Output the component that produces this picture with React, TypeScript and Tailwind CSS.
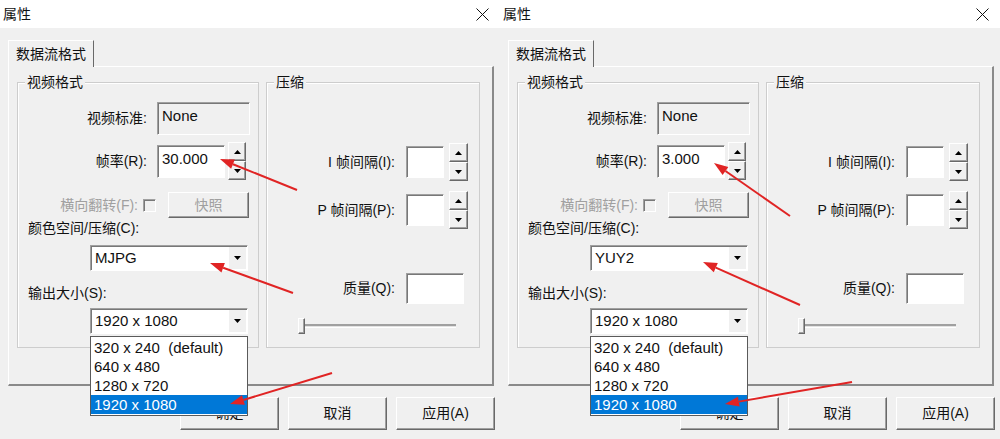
import React from 'react';

type Pt = [number, number];

// classic win32 3D edges
const raised = 'border border-t-white border-l-white border-r-[#696969] border-b-[#696969] shadow-[inset_-1px_-1px_0_#a0a0a0]';
const sunken = 'border border-t-[#a0a0a0] border-l-[#a0a0a0] border-r-white border-b-white shadow-[inset_1px_1px_0_#787878]';

function Tri({ down }: { down?: boolean }) {
  return (
    <svg width="7" height="4" viewBox="0 0 7 4">
      <path d={down ? 'M0 0h7L3.5 4z' : 'M0 4h7L3.5 0z'} fill="#000" />
    </svg>
  );
}

function Spinner({ className }: { className: string }) {
  return (
    <div className={`flex flex-col ${className}`}>
      <div className={`flex-1 flex items-center justify-center bg-[#f0f0f0] ${raised}`}>
        <Tri />
      </div>
      <div className={`flex-1 flex items-center justify-center bg-[#f0f0f0] ${raised}`}>
        <Tri down />
      </div>
    </div>
  );
}

function Combo({ value, children }: { value: string; children?: React.ReactNode }) {
  return (
    <div className={`relative flex w-[158px] h-[26px] bg-white ${sunken}`}>
      <span className="flex-1 flex items-center pl-[4px] text-[15px]">{value}</span>
      <div className="flex items-center justify-center w-[17px] my-[1px] mr-[1px] bg-[#f0f0f0]">
        <Tri down />
      </div>
      {children}
    </div>
  );
}

function GroupBox({ title, className, children }: { title: string; className: string; children: React.ReactNode }) {
  return (
    <div className={`relative border border-[#cdcdcd] shadow-[inset_1px_1px_0_#fff] ${className}`}>
      <span className="absolute -top-[9px] left-[7px] px-[2px] bg-[#f0f0f0] text-[14px] leading-[16px]">{title}</span>
      {children}
    </div>
  );
}

const sizes = ['320 x 240  (default)', '640 x 480', '1280 x 720', '1920 x 1080'];

function Dialog({ rate, codec }: { rate: string; codec: string }) {
  return (
    <div className="flex flex-col w-[500px] h-[439px]">
      <div className="flex items-center justify-between h-[28px] bg-white pl-[3px] pr-[11px]">
        <span className="text-[14px]">属性</span>
        <svg width="13" height="13" viewBox="0 0 13 13">
          <path d="M0.5 0.5l12 12M12.5 0.5l-12 12" stroke="#111" strokeWidth="1" />
        </svg>
      </div>

      <div className="pt-[12px] pl-[8px]">
        <div className="relative z-[1] -mb-px flex items-center justify-center w-[86px] h-[27px] bg-[#f0f0f0] border-t border-l border-white border-r border-r-[#696969] text-[14px]">
          数据流格式
        </div>
        <div className="flex gap-[7px] w-[486px] h-[320px] pl-[8px] pt-[15px] border-t border-l border-white border-r-2 border-b-2 border-r-[#8a8a8a] border-b-[#8a8a8a]">
          <GroupBox title="视频格式" className="w-[242px] h-[266px]">
            <div className="flex items-center mt-[19px] h-[33px]">
              <span className="w-[129px] text-right text-[14px]">视频标准:</span>
              <div className={`ml-[10px] w-[93px] h-[33px] pl-[4px] pt-[4px] leading-[18px] text-[15px] ${sunken}`}>None</div>
            </div>
            <div className="flex items-center mt-[7px] h-[38px]">
              <span className="w-[129px] text-right text-[14px]">帧率(R):</span>
              <div className={`ml-[10px] w-[68px] h-[33px] pl-[4px] pt-[4px] leading-[18px] text-[15px] bg-white ${sunken}`}>{rate}</div>
              <Spinner className="ml-[3px] w-[18px] h-[38px]" />
            </div>
            <div className="flex items-center mt-[12px] h-[26px] text-[#a0a0a0]">
              <span className="w-[120px] text-right text-[14px]">横向翻转(F):</span>
              <div className={`ml-[5px] w-[13px] h-[13px] ${sunken}`} />
              <div className={`ml-[12px] w-[81px] h-[26px] flex items-center justify-center text-[14px] ${raised}`}>快照</div>
            </div>
            <div className="mt-[2px] pl-[10px] h-[16px] leading-[16px] text-[14px]">颜色空间/压缩(C):</div>
            <div className="mt-[9px] ml-[72px]">
              <Combo value={codec} />
            </div>
            <div className="mt-[14px] pl-[10px] h-[16px] leading-[16px] text-[14px]">输出大小(S):</div>
            <div className="mt-[7px] ml-[72px]">
              <Combo value="1920 x 1080">
                <ul className="absolute z-10 -left-px top-[27px] w-[158px] py-px bg-white border border-[#5a5a5a]">
                  {sizes.map((s, i) => (
                    <li
                      key={s}
                      className={`h-[19px] leading-[19px] pl-[3px] text-[15px] whitespace-pre ${i === 3 ? 'bg-[#0078d7] text-white' : ''}`}
                    >
                      {s}
                    </li>
                  ))}
                </ul>
              </Combo>
            </div>
          </GroupBox>

          <GroupBox title="压缩" className="w-[214px] h-[266px]">
            <div className="flex items-center mt-[60px] h-[38px]">
              <span className="w-[128px] text-right text-[14px]">I 帧间隔(I):</span>
              <div className={`ml-[11px] w-[38px] h-[32px] bg-white ${sunken}`} />
              <Spinner className="ml-[5px] w-[19px] h-[38px]" />
            </div>
            <div className="flex items-center mt-[10px] h-[38px]">
              <span className="w-[128px] text-right text-[14px]">P 帧间隔(P):</span>
              <div className={`ml-[11px] w-[38px] h-[32px] bg-white ${sunken}`} />
              <Spinner className="ml-[5px] w-[19px] h-[38px]" />
            </div>
            <div className="flex items-center mt-[44px] h-[31px]">
              <span className="w-[128px] text-right text-[14px]">质量(Q):</span>
              <div className={`ml-[11px] w-[58px] h-[31px] bg-white ${sunken}`} />
            </div>
            {/* quality slider */}
            <div className="relative flex items-center mt-[14px] ml-[31px] w-[158px] h-[16px]">
              <div className="w-full h-[4px] border-t-2 border-t-[#a0a0a0] border-b border-b-white bg-[#e3e3e3]" />
              <div className={`absolute left-0 top-0 w-[7px] h-[16px] bg-[#f0f0f0] ${raised}`} />
            </div>
          </GroupBox>
        </div>
      </div>

      <div className="flex justify-end gap-[9px] pr-[5px] mt-[11px]">
        {['确定', '取消', '应用(A)'].map((b) => (
          <div key={b} className={`flex items-center justify-center w-[99px] h-[33px] bg-[#f0f0f0] text-[14px] ${raised}`}>
            {b}
          </div>
        ))}
      </div>
    </div>
  );
}

const ARROWS: [Pt, Pt][] = [
  [[297, 190], [220, 159]],
  [[293, 293], [210, 263]],
  [[332, 373], [230, 404]],
  [[790, 216], [714, 163]],
  [[800, 305], [703, 262]],
  [[852, 382], [725, 404]],
];

function Arrow({ from, to }: { from: Pt; to: Pt }) {
  const dx = to[0] - from[0];
  const dy = to[1] - from[1];
  const len = Math.hypot(dx, dy);
  const ux = dx / len;
  const uy = dy / len;
  const bx = to[0] - ux * 14;
  const by = to[1] - uy * 14;
  const nx = -uy * 5;
  const ny = ux * 5;
  return (
    <g>
      <line x1={from[0]} y1={from[1]} x2={bx} y2={by} stroke="#e02424" strokeWidth={2} />
      <polygon points={`${to[0]},${to[1]} ${bx + nx},${by + ny} ${bx - nx},${by - ny}`} fill="#e02424" />
    </g>
  );
}

export default function App() {
  return (
    <div className="relative flex w-[1000px] h-[439px] overflow-hidden bg-[#f0f0f0] text-[#111] font-['Liberation_Sans','Noto_Sans_CJK_SC',sans-serif]">
      <Dialog rate="30.000" codec="MJPG" />
      <Dialog rate="3.000" codec="YUY2" />
      <svg className="absolute inset-0 z-20 pointer-events-none" width="1000" height="439">
        {ARROWS.map(([a, b], i) => (
          <Arrow key={i} from={a} to={b} />
        ))}
      </svg>
    </div>
  );
}
